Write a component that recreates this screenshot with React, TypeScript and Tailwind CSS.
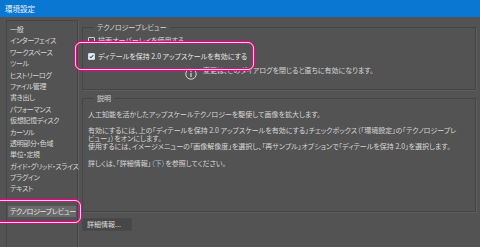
import React from "react";

const sidebarItems = [
  "一般",
  "インターフェイス",
  "ワークスペース",
  "ツール",
  "ヒストリーログ",
  "ファイル管理",
  "書き出し",
  "パフォーマンス",
  "仮想記憶ディスク",
  "カーソル",
  "透明部分・色域",
  "単位・定規",
  "ガイド・グリッド・スライス",
  "プラグイン",
  "テキスト",
];

function CheckBox({ checked }: { checked?: boolean }) {
  return (
    <span className="flex h-[7px] w-[7px] shrink-0 items-center justify-center rounded-[1px] border border-[#d8d8d8] bg-[#e9eef5]">
      {checked ? (
        <svg width="5" height="5" viewBox="0 0 10 10">
          <path d="M1.5 5.2 L4 7.6 L8.6 2.4" fill="none" stroke="#1b5aa6" strokeWidth="2.2" />
        </svg>
      ) : null}
    </span>
  );
}

export default function App() {
  return (
    <div className="relative h-[247px] w-[480px] overflow-hidden bg-[#535353] font-['Noto_Sans_CJK_JP','Noto_Sans',sans-serif] text-[#d6d6d6] [font-feature-settings:'palt']">
      {/* title bar */}
      <div className="flex h-[17px] items-center bg-[#0a78d3] pl-[5px] text-[7.5px] text-[#eaf2fb]">
        環境設定
      </div>

      <div className="flex">
        {/* sidebar */}
        <div className="ml-[6px] mt-[3px] h-[240px] w-[72px] border border-[#454545] pt-[3px] text-[7px] tracking-[-0.35px] shadow-[1px_1px_0_#5d5d5d]">
          {sidebarItems.map((t) => (
            <div key={t} className="h-[11.4px] whitespace-nowrap pl-[3px] leading-[11.4px]">
              {t}
            </div>
          ))}
          <div className="mx-[1px] mt-[11px] h-[11.5px] whitespace-nowrap bg-[#6a6a6a] pl-[2px] leading-[11.5px] text-[#e4e4e4]">
            テクノロジープレビュー
          </div>
        </div>

        {/* main */}
        <div className="ml-[4px] w-[394px]">
          <fieldset className="mt-[6px] h-[67px] border border-[#454545] px-[5px] shadow-[1px_1px_0_#5d5d5d]">
            <legend className="ml-[6px] px-[3px] text-[7px] leading-[9px]">テクノロジープレビュー</legend>
            <div className="mt-[4px] flex h-[9px] items-center gap-[3px] text-[7px]">
              <span className="flex h-[7px] w-[7px] shrink-0 rounded-[1px] border border-[#cfcfcf]" />
              <span className="whitespace-nowrap">描画オーバーレイを使用する</span>
            </div>
            <div className="mt-[7px] flex h-[9px] items-center gap-[3px] text-[7px] text-[#e6e6e6]">
              <CheckBox checked />
              <span className="whitespace-nowrap">ディテールを保持 2.0 アップスケールを有効にする</span>
            </div>
            <div className="ml-[97px] mt-[4px] flex h-[10px] items-start gap-[6px] text-[7px]">
              <svg width="12" height="12" viewBox="0 0 12 12" className="mt-[3px] shrink-0">
                <circle cx="6" cy="6" r="5.2" fill="none" stroke="#d6d6d6" strokeWidth="1" />
                <rect x="5.4" y="5" width="1.2" height="4" fill="#d6d6d6" />
                <rect x="5.4" y="3" width="1.2" height="1.2" fill="#d6d6d6" />
              </svg>
              <span className="whitespace-nowrap leading-[10px]">変更は、このダイアログを閉じると直ちに有効になります。</span>
            </div>
          </fieldset>

          <fieldset className="mt-[4px] h-[118px] border border-[#454545] px-[5px] text-[7px] shadow-[1px_1px_0_#5d5d5d]">
            <legend className="ml-[6px] px-[3px] text-[7px] leading-[9px]">説明</legend>
            <div className="mt-[7px] whitespace-nowrap leading-[8px]">
              人工知能を活かしたアップスケールテクノロジーを駆使して画像を拡大します。
            </div>
            <div className="mt-[8px] whitespace-nowrap leading-[8px]">
              <div>
                有効にするには、上の「ディテールを保持 2.0 アップスケールを有効にする」チェックボックス（「環境設定」の「テクノロジープレ
              </div>
              <div>ビュー」）をオンにします。</div>
              <div>
                使用するには、イメージメニューの「画像解像度」を選択し、「再サンプル」オプションで「ディテールを保持 2.0」を選択します。
              </div>
            </div>
            <div className="mt-[9px] whitespace-nowrap leading-[8px]">
              詳しくは、「詳細情報」<span className="text-[#a9bfdc]">（下）</span>を参照してください。
            </div>
          </fieldset>

          <button className="mt-[6px] flex h-[13px] w-[50px] items-center rounded-[1px] border border-[#4a4a4a] bg-[#474747] pl-[4px] text-[7px] text-[#dcdcdc]">
            詳細情報...
          </button>
        </div>
      </div>

      {/* annotation highlights */}
      <div className="pointer-events-none absolute left-[75px] top-[42px] h-[28px] w-[179px] rounded-[6px] border border-[#ffd6ec] shadow-[0_0_0_1px_#e6067f,inset_0_0_0_1px_#e6067f]" />
      <div className="pointer-events-none absolute left-[-6px] top-[200px] h-[23px] w-[87px] rounded-[6px] border border-[#ffd6ec] shadow-[0_0_0_1px_#e6067f,inset_0_0_0_1px_#e6067f]" />
    </div>
  );
}
